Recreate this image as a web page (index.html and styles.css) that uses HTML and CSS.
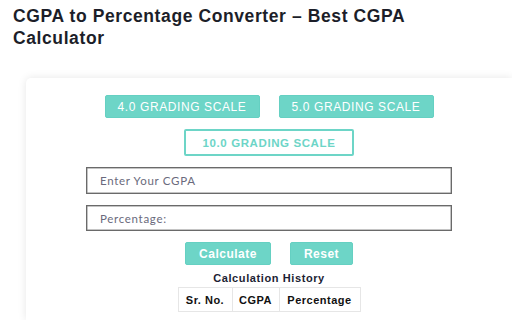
FILE: index.html
```html
<!DOCTYPE html>
<html>
<head>
<meta charset="utf-8">
<link rel="stylesheet" href="styles.css">
</head>
<body>
<h1 class="title">CGPA to Percentage Converter – Best CGPA Calculator</h1>
<div class="card">
  <div class="scale-row">
    <button class="scale-btn">4.0 GRADING SCALE</button>
    <button class="scale-btn">5.0 GRADING SCALE</button>
  </div>
  <div class="scale-row">
    <button class="scale-btn active">10.0 GRADING SCALE</button>
  </div>
  <input class="field" type="text" placeholder="Enter Your CGPA">
  <input class="field field-2" type="text" placeholder="Percentage:">
  <div class="action-row">
    <button class="action-btn calc">Calculate</button>
    <button class="action-btn reset">Reset</button>
  </div>
  <div class="history-title">Calculation History</div>
  <table class="history">
    <tr><th class="c1">Sr. No.</th><th class="c2">CGPA</th><th class="c3">Percentage</th></tr>
  </table>
</div>
</body>
</html>
```
FILE: styles.css
```css
html, body { margin: 0; padding: 0; background: #ffffff; overflow: hidden; }
body { font-family: "Liberation Sans", Arial, sans-serif; width: 512px; height: 320px; }
.title {
  margin: 5px 0 0 13px;
  font-size: 17.5px;
  line-height: 22px;
  font-weight: bold;
  letter-spacing: 0.6px;
  color: #1c1e29;
  width: 460px;
}
.card {
  margin: 29px 0 0 26px;
  width: 486px;
  height: 242px;
  background: #fff;
  border-radius: 5px 0 0 0;
  box-shadow: 0 0 8px rgba(0,0,0,0.10);
  padding-top: 17px;
  display: flex;
  flex-direction: column;
  align-items: center;
  box-sizing: border-box;
}
.scale-row { display: flex; gap: 19px; justify-content: center; }
.scale-row + .scale-row { margin-top: 11px; }
.scale-btn {
  width: 155px;
  height: 23px;
  border: 1px solid #65d0c2;
  border-radius: 2px;
  background: #6dd5c7;
  color: #fff;
  font-family: "Liberation Sans", Arial, sans-serif;
  font-size: 12px;
  letter-spacing: 0.6px;
  padding: 0;
}
.scale-btn.active {
  width: 170px;
  height: 27px;
  border: 2px solid #6dd5c7;
  background: #fff;
  color: #6dd5c7;
  font-weight: bold;
  font-size: 11.5px;
  letter-spacing: 0.6px;
}
.field {
  margin-top: 11px;
  width: 366px;
  height: 27px;
  box-sizing: border-box;
  border: 1px solid #6a6a6a;
  box-shadow: inset 0 0 0 0.5px #8a8a8a;
  padding: 0 0 0 13px;
  font-family: "Lato", "Open Sans", sans-serif;
  font-weight: 400;
  font-size: 11.5px;
  color: #555;
  outline: none;
}
.field-2 { height: 26px; }
.field::placeholder { color: #6a6a7c; letter-spacing: 0.7px; }
.action-row { display: flex; gap: 19px; margin-top: 11px; }
.action-btn {
  height: 23px;
  border: 1px solid #65d0c2;
  border-radius: 2px;
  background: #6dd5c7;
  color: #fff;
  font-family: "Liberation Sans", Arial, sans-serif;
  font-weight: bold;
  font-size: 12px;
  letter-spacing: 0.5px;
  padding: 0;
}
.calc { width: 86px; }
.reset { width: 63px; }
.history-title {
  margin-top: 6px;
  font-size: 11px;
  line-height: 14px;
  font-weight: bold;
  letter-spacing: 0.6px;
  color: #1c1e33;
}
.history {
  margin-top: 2px;
  border-collapse: collapse;
}
.history th {
  border: 1px solid #e6e6e6;
  height: 24px;
  padding: 0;
  font-size: 11px;
  font-weight: bold;
  letter-spacing: 0.5px;
  color: #111;
  box-sizing: border-box;
}
.c1 { width: 54px; }
.c2 { width: 47px; }
.c3 { width: 81px; }
```
